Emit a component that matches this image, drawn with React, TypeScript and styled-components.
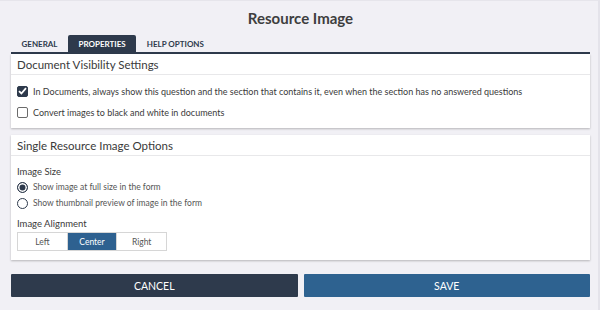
import React, { useState } from 'react'
import styled, { createGlobalStyle } from 'styled-components'

const GlobalStyle = createGlobalStyle`
  html, body {
    margin: 0;
    padding: 0;
    background: #f1f0f5;
    font-family: Lato, "Open Sans", sans-serif;
  }
  * { box-sizing: border-box; }
`

const tabs = ['GENERAL', 'PROPERTIES', 'HELP OPTIONS']
const aligns = ['Left', 'Center', 'Right']

const Check = ({ checked }: { checked: boolean }) => (
  <CheckBox checked={checked}>
    {checked && (
      <svg width="9" height="8" viewBox="0 0 9 8">
        <path d="M1 4.2 L3.4 6.5 L8 1.2" fill="none" stroke="#fff" strokeWidth="1.8" />
      </svg>
    )}
  </CheckBox>
)

const App = () => {
  const [tab] = useState(1)
  const [align, setAlign] = useState(1)
  const [size, setSize] = useState(0)

  return (
    <Page>
      <GlobalStyle />
      <Title>Resource Image</Title>
      <Tabs>
        {tabs.map((t, i) => (
          <Tab key={t} active={i === tab}>{t}</Tab>
        ))}
      </Tabs>

      <Card>
        <CardHead>Document Visibility Settings</CardHead>
        <CardBody>
          <Option>
            <Check checked />
            In Documents, always show this question and the section that contains it, even when the section has no answered questions
          </Option>
          <Option>
            <Check checked={false} />
            Convert images to black and white in documents
          </Option>
        </CardBody>
      </Card>

      <Card>
        <CardHead>Single Resource Image Options</CardHead>
        <CardBody2>
          <Label>Image Size</Label>
          <Radio onClick={() => setSize(0)}>
            <Dot on={size === 0} />
            Show image at full size in the form
          </Radio>
          <Radio onClick={() => setSize(1)}>
            <Dot on={size === 1} />
            Show thumbnail preview of image in the form
          </Radio>
          <Label2>Image Alignment</Label2>
          <Segments>
            {aligns.map((a, i) => (
              <Segment key={a} active={i === align} onClick={() => setAlign(i)}>{a}</Segment>
            ))}
          </Segments>
        </CardBody2>
      </Card>

      <Footer>
        <Button kind="cancel">CANCEL</Button>
        <Button kind="save">SAVE</Button>
      </Footer>
    </Page>
  )
}

export default App

const Page = styled.div`
  width: 600px;
  height: 310px;
  padding: 0 8px 0 11px;
  border-right: 2px solid #e4e3ea;
  border-top: 1px solid #e6e5eb;
  color: #3d3d3d;
`
const Title = styled.div`
  text-align: center;
  font-size: 15px;
  font-weight: 700;
  color: #3e3e3e;
  padding-top: 8px;
  height: 34px;
`
const Tabs = styled.div`
  display: flex;
  border-bottom: 2px solid #2e3a4c;
  height: 19px;
`
const Tab = styled.div<{ active?: boolean }>`
  font-size: 8px;
  font-weight: 700;
  padding: 0 10.5px;
  display: flex;
  align-items: center;
  border-radius: 2px 2px 0 0;
  color: ${p => (p.active ? '#fff' : '#2e3a4c')};
  background: ${p => (p.active ? '#2e3a4c' : 'transparent')};
`
const Card = styled.div`
  background: #fff;
  margin-bottom: 7px;
  box-shadow: 0 1px 2px rgba(0, 0, 0, 0.25);
`
const CardHead = styled.div`
  height: 21px;
  padding: 0 6px;
  display: flex;
  align-items: center;
  font-size: 11.5px;
  color: #3a3a3a;
  border-bottom: 1px solid #e8e8ea;
`
const CardBody = styled.div`
  padding: 10px 6px 10px;
  display: flex;
  flex-direction: column;
  gap: 9px;
`
const Option = styled.div`
  display: flex;
  align-items: center;
  gap: 5px;
  font-size: 9px;
  color: #3a3a3a;
  height: 12px;
`
const CheckBox = styled.span<{ checked: boolean }>`
  width: 11px;
  height: 11px;
  border-radius: 2px;
  display: inline-flex;
  align-items: center;
  justify-content: center;
  background: ${p => (p.checked ? '#2e3a4c' : '#fff')};
  border: 1px solid ${p => (p.checked ? '#2e3a4c' : '#6b6b6b')};
`
const CardBody2 = styled.div`
  padding: 8px 6px 9px;
  display: flex;
  flex-direction: column;
`
const Label = styled.div`
  font-size: 9.5px;
  color: #3a3a3a;
  height: 15px;
  display: flex;
  align-items: center;
`
const Label2 = styled(Label)`
  margin-top: 5px;
  height: 14px;
`
const Radio = styled.div`
  display: flex;
  align-items: center;
  gap: 5px;
  font-size: 8.5px;
  color: #555;
  height: 16px;
  cursor: pointer;
`
const Dot = styled.span<{ on: boolean }>`
  width: 11px;
  height: 11px;
  border-radius: 50%;
  border: 1.5px solid #2e3a4c;
  background: ${p => (p.on ? '#2e3a4c' : '#fff')};
  box-shadow: ${p => (p.on ? 'inset 0 0 0 1.5px #fff' : 'none')};
`
const Segments = styled.div`
  display: flex;
  width: 150px;
  margin-top: 2px;
  border: 1px solid #d6d6d6;
`
const Segment = styled.div<{ active?: boolean }>`
  flex: 1;
  height: 17px;
  display: flex;
  align-items: center;
  justify-content: center;
  font-size: 8.5px;
  cursor: pointer;
  color: ${p => (p.active ? '#fff' : '#555')};
  background: ${p => (p.active ? '#2e6190' : '#fff')};
  & + & { border-left: 1px solid #d6d6d6; }
`
const Footer = styled.div`
  display: flex;
  gap: 6px;
  margin-top: 14px;
`
const Button = styled.div<{ kind: 'cancel' | 'save' }>`
  flex: 1;
  height: 23px;
  display: flex;
  align-items: center;
  justify-content: center;
  font-size: 10.5px;
  color: #fff;
  border-radius: 1px;
  background: ${p => (p.kind === 'cancel' ? '#2e3a4c' : '#2e6290')};
`
